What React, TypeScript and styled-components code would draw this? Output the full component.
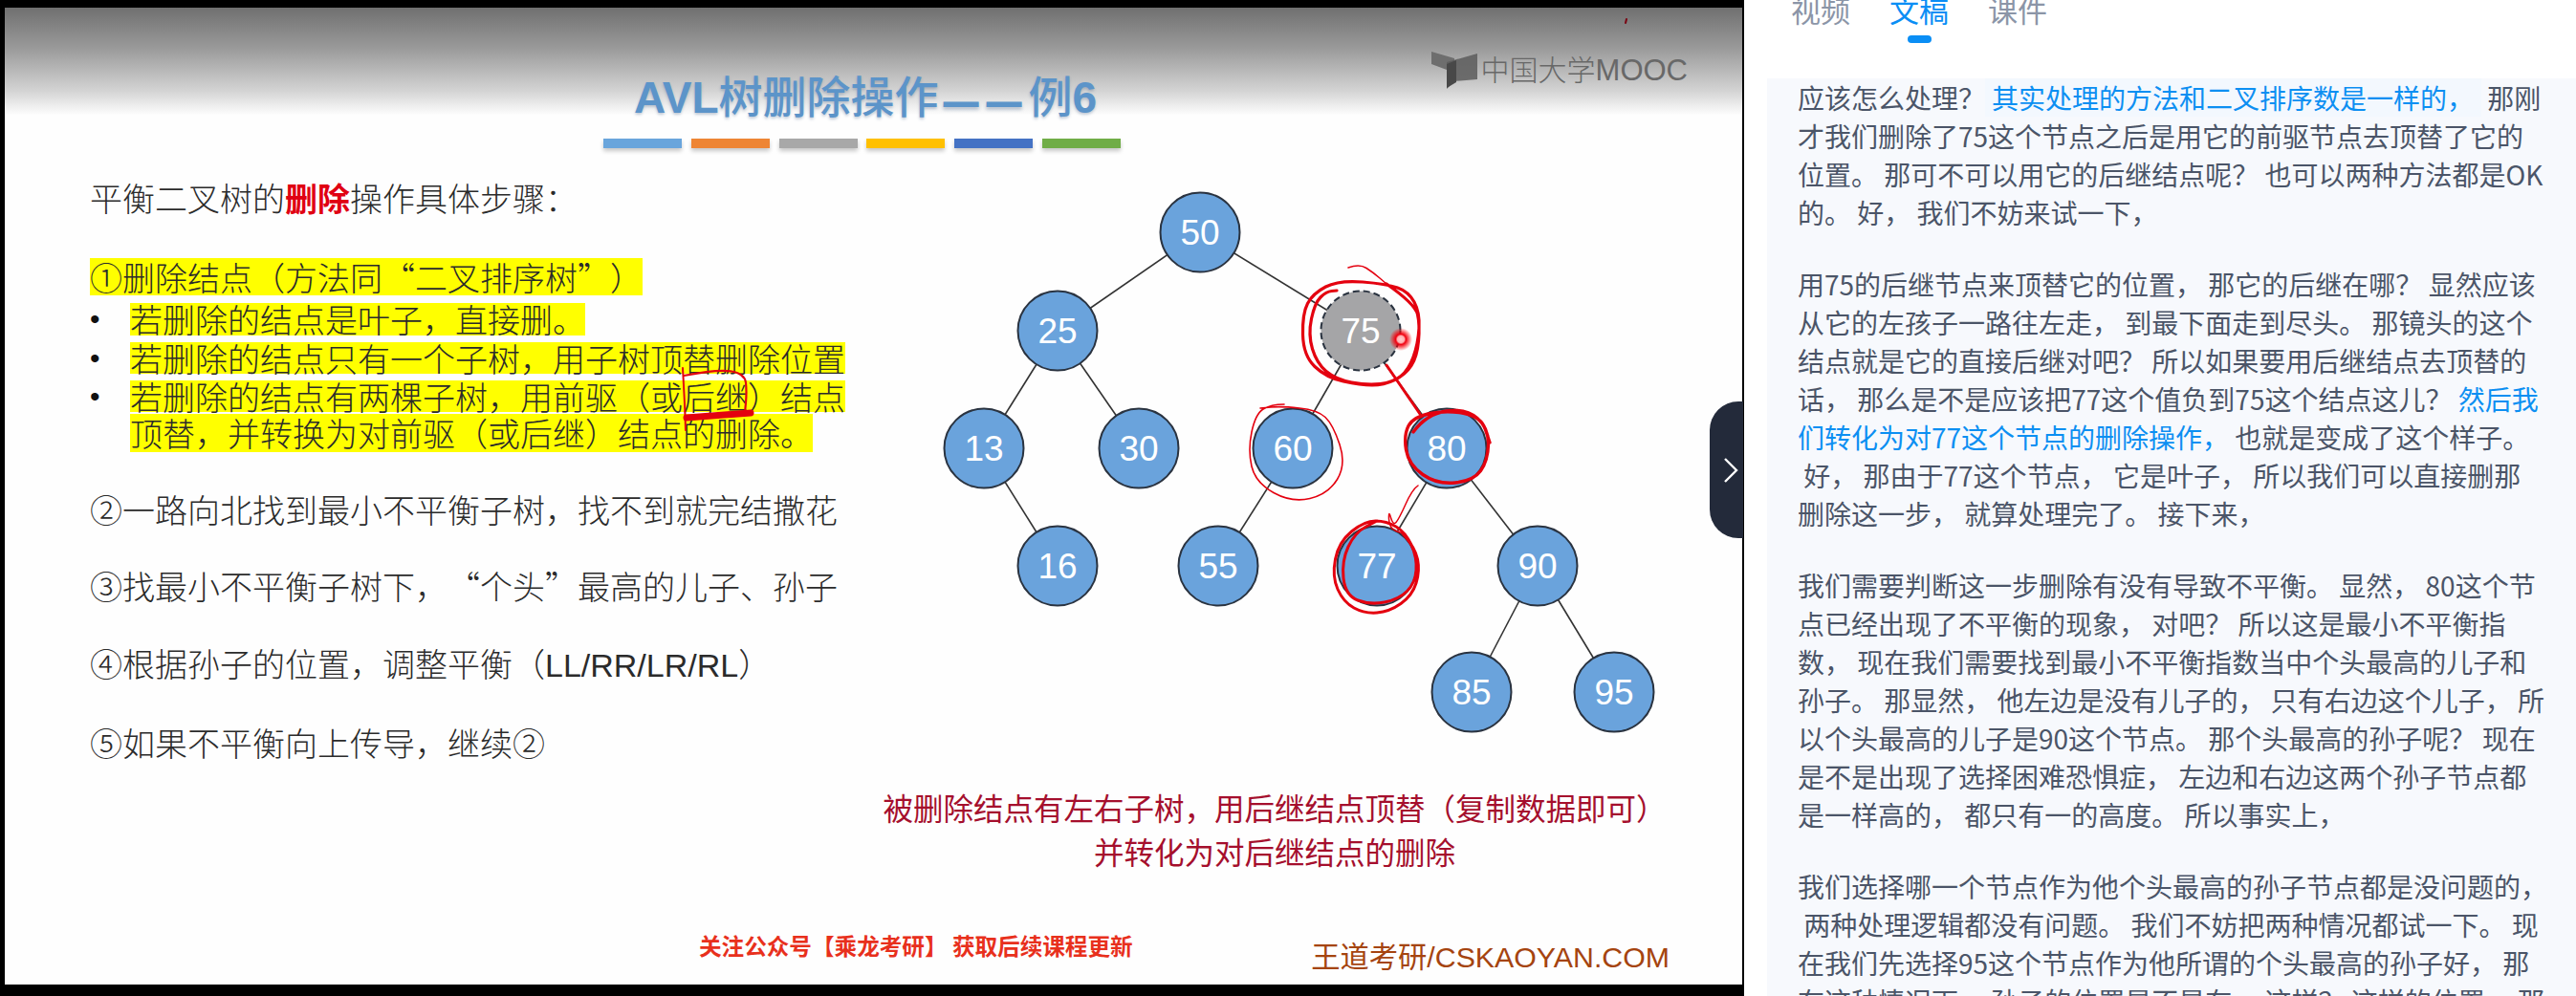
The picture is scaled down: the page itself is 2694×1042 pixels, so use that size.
import styled, { createGlobalStyle } from 'styled-components';

const CJK = '"Noto Sans CJK SC", "Noto Sans", sans-serif';
const LATIN = '"Liberation Sans", "Noto Sans CJK SC", sans-serif';

const GlobalStyle = createGlobalStyle`
  html, body {
    margin: 0;
    padding: 0;
    background: #fff;
  }
  body {
    width: 2694px;
    height: 1042px;
    overflow: hidden;
    font-family: ${CJK};
    text-spacing-trim: space-all;
  }
`;

// the slide and the transcript use full-width CJK punctuation throughout
const fw = (s: string) =>
  s
    .replace(/,/g, '\uFF0C')
    .replace(/\?/g, '\uFF1F')
    .replace(/\(/g, '\uFF08')
    .replace(/\)/g, '\uFF09')
    .replace(/:/g, '\uFF1A');

const Page = styled.div`
  display: flex;
  width: 2694px;
  height: 1042px;
  overflow: hidden;
`;

/* ---------- video side ---------- */

const VideoArea = styled.div`
  position: relative;
  box-sizing: border-box;
  flex: none;
  width: 1824px;
  height: 1042px;
  padding: 8px 2px 12px 5px;
  background: #000;
`;

const Slide = styled.div`
  position: relative;
  display: flex;
  flex-direction: column;
  height: 1022px;
  background: #fefefe;
`;

const SlideHeader = styled.div`
  display: flex;
  align-items: flex-start;
  flex: none;
  height: 112px;
  padding: 0 57px 0 658px;
  background: linear-gradient(180deg, #707070 0%, #9a9a9a 38%, #d4d4d4 78%, #fdfdfd 100%);
`;

const Title = styled.h1`
  margin: 62px 0 0;
  font-family: ${CJK};
  font-size: 46px;
  font-weight: 500;
  line-height: 56px;
  color: #5c94c9;
  white-space: nowrap;
  text-shadow: 0 2px 3px rgba(60, 90, 130, 0.3);
`;

const TitleLatin = styled.span`
  font-family: "Liberation Sans", sans-serif;
  font-weight: 700;
`;

const TitleDash = styled.span`
  display: inline-block;
  margin: 0 -1px 0 5px;
  font-family: "Liberation Sans", sans-serif;
  font-size: 37px;
  font-weight: 700;
  letter-spacing: 8px;
  transform: scaleY(1.5);
`;

const Logo = styled.div`
  display: flex;
  align-items: center;
  gap: 4px;
  margin: 44px 0 0 auto;
`;

const LogoText = styled.span`
  font-family: ${CJK};
  font-size: 30px;
  font-weight: 300;
  line-height: 38px;
  color: #686868;
  white-space: nowrap;
`;

const LogoLatin = styled.span`
  font-family: "Liberation Sans", sans-serif;
  font-size: 31px;
`;

const Bars = styled.div`
  display: flex;
  flex: none;
  gap: 9.8px;
  margin: 25px 0 0 626px;
`;

const Bar = styled.div<{ $color: string }>`
  width: 82px;
  height: 10px;
  background: ${({ $color }) => $color};
  box-shadow: 0 3px 4px rgba(0, 0, 0, 0.22);
`;

const SlideBody = styled.div`
  display: grid;
  grid-template-columns: 895px 1fr;
  flex: none;
  height: 820px;
`;

const LeftColumn = styled.div`
  padding: 35px 0 0 89px;
`;

const RightColumn = styled.div`
  display: flex;
  flex-direction: column;
`;

const SongLine = styled.div<{ $top?: number; $h?: number }>`
  margin-top: ${({ $top }) => $top ?? 0}px;
  font-size: 34px;
  font-weight: 300;
  line-height: ${({ $h }) => $h ?? 40}px;
  height: ${({ $h }) => $h ?? 40}px;
  color: #2b2b2b;
  white-space: nowrap;
`;

const Emphasis = styled.span`
  color: #e00012;
  font-weight: 700;
`;

const Yellow = styled.span`
  display: inline-block;
  height: 100%;
  background: #ffff00;
`;

const BulletRow = styled.div<{ $top: number }>`
  display: flex;
  margin-top: ${({ $top }) => $top}px;
`;

const Bullet = styled.span`
  flex: none;
  width: 42px;
  font-family: "Liberation Sans", sans-serif;
  font-size: 30px;
  line-height: 33px;
  color: #111;
`;

const BulletLines = styled.div`
  display: flex;
  flex-direction: column;
`;

const Latin = styled.span`
  font-family: "Liberation Sans", sans-serif;
  font-size: 34px;
`;

const TreeCanvas = styled.svg`
  display: block;
  flex: none;
  width: 922px;
  height: 660px;
  overflow: visible;
`;

const NodeLabel = styled.text`
  font-family: "Liberation Sans", sans-serif;
  font-size: 37px;
  fill: #fff;
  text-anchor: middle;
`;

const Caption = styled.div`
  margin-top: 6px;
  padding-right: 56px;
  font-size: 31.5px;
  line-height: 46px;
  text-align: center;
  color: #a50f2d;
  white-space: nowrap;
`;

const SlideFooter = styled.div`
  display: flex;
  justify-content: space-between;
  align-items: flex-start;
  flex: none;
  height: 47px;
  padding: 0 76px 0 726px;
`;

const Promo = styled.div`
  margin-top: 2px;
  font-size: 23.6px;
  font-weight: 700;
  line-height: 24px;
  color: #e8301c;
  white-space: nowrap;
`;

const Brand = styled.div`
  margin-top: 12px;
  font-family: ${LATIN};
  font-size: 30.3px;
  line-height: 30px;
  color: #a5440f;
  white-space: nowrap;
`;

const InkOverlay = styled.svg`
  position: absolute;
  left: -5px;
  top: -8px;
  width: 1824px;
  height: 1042px;
  pointer-events: none;
`;

const CollapseTab = styled.button`
  position: absolute;
  left: 1788px;
  top: 420px;
  display: flex;
  align-items: center;
  justify-content: center;
  width: 35px;
  height: 143px;
  padding: 0 0 0 8px;
  border: none;
  border-radius: 30px 0 0 30px;
  background: #232a3a;
`;

/* ---------- transcript side ---------- */

const Panel = styled.div`
  flex: 1;
  min-width: 0;
  height: 1042px;
  overflow: hidden;
  background: #fff;
`;

const Tabs = styled.div`
  display: flex;
  gap: 41px;
  padding-left: 49px;
`;

const Tab = styled.div<{ $active?: boolean }>`
  display: flex;
  flex-direction: column;
  align-items: center;
  width: 62px;
  font-size: 31px;
  line-height: 20px;
  color: ${({ $active }) => ($active ? '#0a8ef5' : '#8b95a7')};
`;

const TabIndicator = styled.div`
  width: 25px;
  height: 8px;
  margin-top: 17px;
  border-radius: 4px;
  background: #0a8ef5;
`;

const Transcript = styled.div`
  margin: 37px 0 0 24px;
  padding-left: 32px;
  min-height: 960px;
  background: #f7f9fd;
`;

const Paragraph = styled.div`
  & + & {
    margin-top: 35px;
  }
`;

const Line = styled.div`
  font-size: 28px;
  line-height: 40px;
  height: 40px;
  color: #4b5568;
  white-space: pre;
`;

const Accent = styled.span<{ $boxed?: boolean }>`
  display: inline-block;
  color: #0c8ff2;
  background: ${({ $boxed }) => ($boxed ? '#f3f8fe' : 'transparent')};
  padding: ${({ $boxed }) => ($boxed ? '0 8px 0 7px' : '0')};
`;

/* ---------- data ---------- */

const barColors = ['#69a5dc', '#ee8534', '#a8a8a8', '#ffc000', '#4472c4', '#70ad47'];

const nodes: Record<string, [number, number]> = {
  '50': [1255, 243],
  '25': [1106, 346],
  '75': [1423, 346],
  '13': [1029, 469],
  '30': [1191, 469],
  '60': [1352, 469],
  '80': [1513, 469],
  '16': [1106, 592],
  '55': [1274, 592],
  '77': [1440, 592],
  '90': [1608, 592],
  '85': [1539, 724],
  '95': [1688, 724],
};

const edges = [
  ['50', '25'],
  ['50', '75'],
  ['25', '13'],
  ['25', '30'],
  ['13', '16'],
  ['75', '60'],
  ['75', '80'],
  ['60', '55'],
  ['80', '77'],
  ['80', '90'],
  ['90', '85'],
  ['90', '95'],
];

type Pt = [number, number];

// smooth hand-drawn stroke through the points
const ink = (pts: Pt[]) => {
  let d = `M${pts[0][0]} ${pts[0][1]}`;
  for (let i = 1; i < pts.length - 1; i++) {
    const mx = (pts[i][0] + pts[i + 1][0]) / 2;
    const my = (pts[i][1] + pts[i + 1][1]) / 2;
    d += ` Q${pts[i][0]} ${pts[i][1]} ${mx} ${my}`;
  }
  const last = pts[pts.length - 1];
  return `${d} L${last[0]} ${last[1]}`;
};

const loop75: Pt[] = [
  [1450, 297], [1480, 318], [1485, 340], [1482, 373], [1470, 392], [1447, 403],
  [1423, 403], [1387, 395], [1363, 372], [1362, 328], [1373, 307], [1400, 293], [1450, 297], [1473, 305],
  [1485, 327], [1483, 360], [1473, 387], [1457, 400], [1430, 403], [1397, 397], [1377, 380], [1368, 350],
  [1375, 317], [1387, 305], [1398, 304],
];
const loop75Tail: Pt[] = [[1410, 280], [1422, 276], [1436, 285], [1450, 297]];
const loop80: Pt[] = [
  [1478, 452], [1492, 433], [1533, 427], [1557, 448], [1556, 482], [1541, 503], [1503, 507], [1473, 486],
  [1468, 455], [1478, 436], [1514, 429], [1549, 436], [1558, 463],
];
const loop60: Pt[] = [
  [1343, 423], [1329, 423], [1313, 433], [1305, 471], [1313, 505], [1351, 526], [1389, 517], [1408, 486],
  [1394, 444], [1378, 429], [1340, 425], [1318, 427],
];
const hook77: Pt[] = [
  [1483, 508], [1477, 512], [1463, 543], [1457, 550], [1452, 533], [1453, 553], [1467, 558],
];
const loop77: Pt[] = [
  [1467, 558], [1480, 573], [1485, 597], [1477, 623], [1453, 640], [1427, 642], [1405, 630], [1393, 603],
  [1400, 567], [1427, 545], [1450, 545], [1470, 557], [1482, 583], [1480, 610], [1463, 627], [1433, 633],
  [1407, 623], [1403, 587], [1417, 557], [1440, 545],
];
const box: Pt[] = [[714, 385], [716, 420], [717, 450]];
const boxTop: Pt[] = [[715, 393], [751, 386], [779, 391], [781, 410], [779, 432]];

type Piece = string | { blue: string; boxed?: boolean };

const transcript: Piece[][][] = [
  [
    ['应该怎么处理?', { blue: '其实处理的方法和二叉排序数是一样的,', boxed: true }, ' 那刚'],
    ['才我们删除了75这个节点之后是用它的前驱节点去顶替了它的'],
    ['位置。 那可不可以用它的后继结点呢? 也可以两种方法都是OK'],
    ['的。 好, 我们不妨来试一下,'],
  ],
  [
    ['用75的后继节点来顶替它的位置, 那它的后继在哪? 显然应该'],
    ['从它的左孩子一路往左走, 到最下面走到尽头。 那镜头的这个'],
    ['结点就是它的直接后继对吧? 所以如果要用后继结点去顶替的'],
    ['话, 那么是不是应该把77这个值负到75这个结点这儿? ', { blue: '然后我' }],
    [{ blue: '们转化为对77这个节点的删除操作,' }, ' 也就是变成了这个样子。'],
    [' 好, 那由于77这个节点, 它是叶子, 所以我们可以直接删那'],
    ['删除这一步, 就算处理完了。 接下来,'],
  ],
  [
    ['我们需要判断这一步删除有没有导致不平衡。 显然, 80这个节'],
    ['点已经出现了不平衡的现象, 对吧? 所以这是最小不平衡指'],
    ['数, 现在我们需要找到最小不平衡指数当中个头最高的儿子和'],
    ['孙子。 那显然, 他左边是没有儿子的, 只有右边这个儿子, 所'],
    ['以个头最高的儿子是90这个节点。 那个头最高的孙子呢? 现在'],
    ['是不是出现了选择困难恐惧症, 左边和右边这两个孙子节点都'],
    ['是一样高的, 都只有一的高度。 所以事实上,'],
  ],
  [
    ['我们选择哪一个节点作为他个头最高的孙子节点都是没问题的,'],
    [' 两种处理逻辑都没有问题。 我们不妨把两种情况都试一下。 现'],
    ['在我们先选择95这个节点作为他所谓的个头最高的孙子好, 那'],
    ['在这种情况下, 孙子的位置是不是在, 这样? 这样的位置, 那'],
  ],
];

const App = () => {
  return (
    <Page lang="zh-CN">
      <GlobalStyle />
      <VideoArea>
        <Slide>
          <SlideHeader>
            <Title>
              <TitleLatin>AVL</TitleLatin>树删除操作<TitleDash>——</TitleDash>例<TitleLatin>6</TitleLatin>
            </Title>
            <Logo>
              <svg width="48" height="40" viewBox="0 0 48 40">
                <path d="M0 1 L24 8 L24 34 L16 29 L16 20 L0 14 Z" fill="#6e6e6e" />
                <path d="M16 12 L48 3 L48 30 L24 32 L16 40 Z" fill="#5c5c5c" opacity="0.85" />
                <path d="M16 14 L26 10 L26 33 L16 39 Z" fill="#484848" />
              </svg>
              <LogoText>
                中国大学<LogoLatin>MOOC</LogoLatin>
              </LogoText>
            </Logo>
          </SlideHeader>

          <Bars>
            {barColors.map((color) => (
              <Bar key={color} $color={color} />
            ))}
          </Bars>

          <SlideBody>
            <LeftColumn>
              <SongLine $h={34}>
                平衡二叉树的<Emphasis>删除</Emphasis>
                {fw('操作具体步骤:')}
              </SongLine>
              <SongLine $top={46} $h={39}>
                <Yellow>{fw('①删除结点(方法同“二叉排序树”)')}</Yellow>
              </SongLine>
              <BulletRow $top={8}>
                <Bullet>•</Bullet>
                <SongLine $h={34}>
                  <Yellow>{fw('若删除的结点是叶子,直接删。')}</Yellow>
                </SongLine>
              </BulletRow>
              <BulletRow $top={7}>
                <Bullet>•</Bullet>
                <SongLine $h={33}>
                  <Yellow>{fw('若删除的结点只有一个子树,用子树顶替删除位置')}</Yellow>
                </SongLine>
              </BulletRow>
              <BulletRow $top={7}>
                <Bullet>•</Bullet>
                <BulletLines>
                  <SongLine $h={33}>
                    <Yellow>{fw('若删除的结点有两棵子树,用前驱(或后继)结点')}</Yellow>
                  </SongLine>
                  <SongLine $top={2} $h={40}>
                    <Yellow>{fw('顶替,并转换为对前驱(或后继)结点的删除。')}</Yellow>
                  </SongLine>
                </BulletLines>
              </BulletRow>
              <SongLine $top={40}>{fw('②一路向北找到最小不平衡子树,找不到就完结撒花')}</SongLine>
              <SongLine $top={40}>{fw('③找最小不平衡子树下,“个头”最高的儿子、孙子')}</SongLine>
              <SongLine $top={41}>
                {fw('④根据孙子的位置,调整平衡(')}
                <Latin>LL/RR/LR/RL</Latin>
                {fw(')')}
              </SongLine>
              <SongLine $top={43}>{fw('⑤如果不平衡向上传导,继续②')}</SongLine>
            </LeftColumn>

            <RightColumn>
              <TreeCanvas viewBox="900 155 922 660">
                {edges.map(([a, b]) => (
                  <line
                    key={a + b}
                    x1={nodes[a][0]}
                    y1={nodes[a][1]}
                    x2={nodes[b][0]}
                    y2={nodes[b][1]}
                    stroke="#333"
                    strokeWidth="1.6"
                  />
                ))}
                {Object.entries(nodes).map(([label, [x, y]]) => {
                  const deleted = label === '75';
                  return (
                    <g key={label}>
                      <circle
                        cx={x}
                        cy={y}
                        r="41.5"
                        fill={deleted ? '#a5a5a7' : '#6aa3dc'}
                        stroke="#2a3340"
                        strokeWidth="2"
                        strokeDasharray={deleted ? '7 4' : undefined}
                      />
                      <NodeLabel x={x} y={y + 13}>
                        {label}
                      </NodeLabel>
                    </g>
                  );
                })}
              </TreeCanvas>
              <Caption>
                {fw('被删除结点有左右子树,用后继结点顶替(复制数据即可)')}
                <br />
                并转化为对后继结点的删除
              </Caption>
            </RightColumn>
          </SlideBody>

          <SlideFooter>
            <Promo>关注公众号【乘龙考研】 获取后续课程更新</Promo>
            <Brand>王道考研/CSKAOYAN.COM</Brand>
          </SlideFooter>

          <InkOverlay viewBox="0 0 1824 1042">
            <defs>
              <radialGradient id="pointerGlow">
                <stop offset="0%" stopColor="#ffd0d0" />
                <stop offset="30%" stopColor="#ffb0b0" />
                <stop offset="45%" stopColor="#f0000f" />
                <stop offset="100%" stopColor="#ff0000" stopOpacity="0" />
              </radialGradient>
            </defs>
            <g fill="none" stroke="#e4000f" strokeLinecap="round" strokeLinejoin="round">
              <path d={ink(loop75Tail)} strokeWidth="1.5" />
              <path d={ink(loop75)} strokeWidth="3.2" />
              <path d={ink(loop80)} strokeWidth="3.4" />
              <path d={ink(loop60)} strokeWidth="1.6" />
              <path d={ink(hook77)} strokeWidth="1.5" />
              <path d={ink(loop77)} strokeWidth="3" />
              <path d="M1450 382 L1485 433" strokeWidth="3" />
              <path d={ink(box)} strokeWidth="2" />
              <path d={ink(boxTop)} strokeWidth="2.2" />
              <path d="M718 437 L785 432" strokeWidth="7" />
              <path d="M1701 20 L1700 24" stroke="#7a0010" strokeWidth="2" />
            </g>
            <circle cx="1465" cy="355" r="12" fill="url(#pointerGlow)" />
          </InkOverlay>
        </Slide>

        <CollapseTab aria-label="收起">
          <svg width="16" height="28" viewBox="0 0 16 28">
            <path d="M2 2 L14 14 L2 26" fill="none" stroke="#fff" strokeWidth="2.4" />
          </svg>
        </CollapseTab>
      </VideoArea>

      <Panel>
        <Tabs>
          <Tab>视频</Tab>
          <Tab $active>
            文稿
            <TabIndicator />
          </Tab>
          <Tab>课件</Tab>
        </Tabs>
        <Transcript>
          {transcript.map((para, p) => (
            <Paragraph key={p}>
              {para.map((pieces, l) => (
                <Line key={l}>
                  {pieces.map((piece, i) =>
                    typeof piece === 'string' ? (
                      fw(piece)
                    ) : (
                      <Accent key={i} $boxed={piece.boxed}>
                        {fw(piece.blue)}
                      </Accent>
                    ),
                  )}
                </Line>
              ))}
            </Paragraph>
          ))}
        </Transcript>
      </Panel>
    </Page>
  );
};

export default App;
